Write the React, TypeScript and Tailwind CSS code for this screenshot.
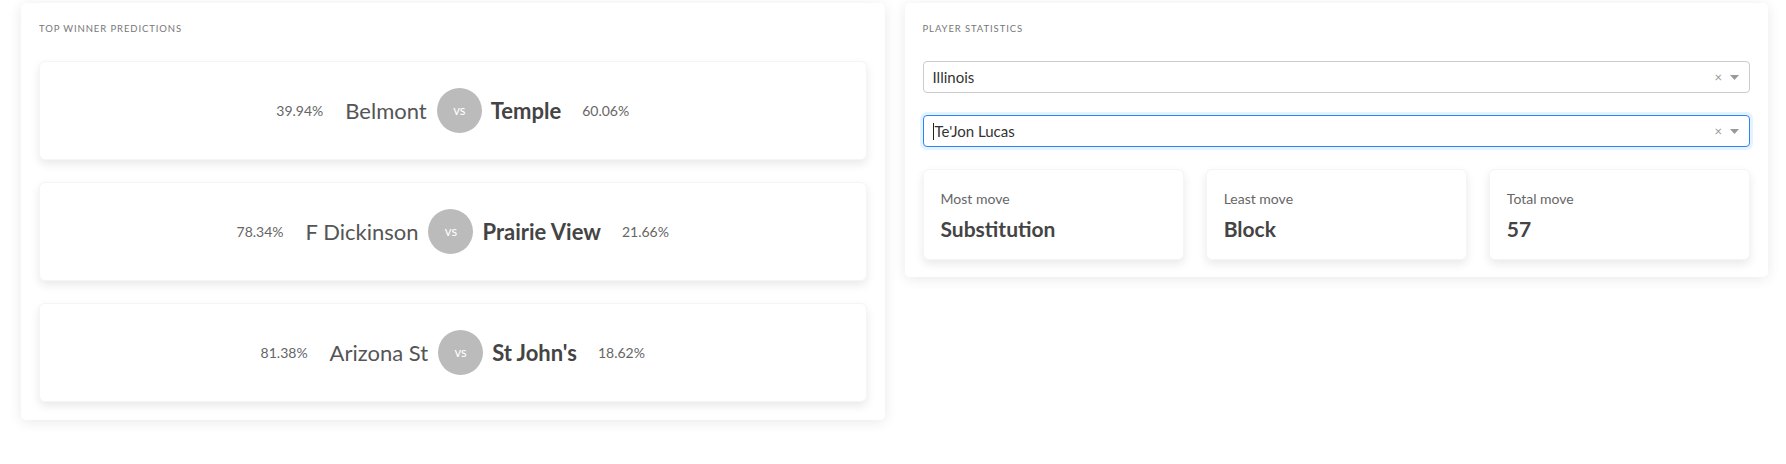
import React from "react";

const matches = [
  { left: "Belmont", lp: "39.94%", right: "Temple", rp: "60.06%" },
  { left: "F Dickinson", lp: "78.34%", right: "Prairie View", rp: "21.66%" },
  { left: "Arizona St", lp: "81.38%", right: "St John's", rp: "18.62%" },
];

const stats = [
  { label: "Most move", value: "Substitution" },
  { label: "Least move", value: "Block" },
  { label: "Total move", value: "57" },
];

function SelectBox({ value, focused }: { value: string; focused?: boolean }) {
  return (
    <div
      className={
        "flex h-[32px] items-center rounded-[4px] border bg-white pl-[9px] pr-[10px] " +
        (focused
          ? "border-[#2b86f5] shadow-[0_0_0_3px_rgba(0,126,255,0.1)]"
          : "border-[#cccccc]")
      }
    >
      <div className="flex flex-1 items-center text-[15px] text-[#333]">
        {focused ? <span className="mr-[1px] h-[17px] w-px bg-[#222]" /> : null}
        {value}
      </div>
      <span className="mr-[8px] text-[13px] leading-none text-[#999]">×</span>
      <svg width="9" height="5" viewBox="0 0 9 5">
        <path d="M0 0h9L4.5 5z" fill="#999" />
      </svg>
    </div>
  );
}

export default function App() {
  return (
    <div
      className="flex min-h-[464px] items-start gap-[20px] bg-white pl-[21px] pr-[18px] pt-[3px]"
      style={{ fontFamily: "Lato, 'Open Sans', sans-serif" }}
    >
      {/* Predictions */}
      <section className="flex-1 rounded-[5px] bg-white px-[18px] pb-[18px] pt-[19px] shadow-[0_2px_14px_rgba(0,0,0,0.09)]">
        <h2 className="text-[9.5px] uppercase tracking-[0.9px] text-[#777]">
          Top winner predictions
        </h2>
        <div className="mt-[25px] flex flex-col gap-[22px]">
          {matches.map((m) => (
            <div
              key={m.left}
              className="flex h-[99px] items-center justify-center rounded-[6px] border border-[#f5f5f5] bg-white shadow-[0_4px_10px_rgba(0,0,0,0.09)]"
            >
              <span className="text-[14px] text-[#666]">{m.lp}</span>
              <span className="ml-[22px] mr-[10px] text-[22px] text-[#555]">{m.left}</span>
              <span className="flex h-[45px] w-[45px] items-center justify-center rounded-full bg-[#bbbbbb] text-[13px] text-white">
                vs
              </span>
              <span className="ml-[9px] mr-[21px] text-[22px] font-bold text-[#444]">
                {m.right}
              </span>
              <span className="text-[14px] text-[#666]">{m.rp}</span>
            </div>
          ))}
        </div>
      </section>

      {/* Player statistics */}
      <section className="flex-1 rounded-[5px] bg-white px-[18px] pb-[17px] pt-[19px] shadow-[0_2px_14px_rgba(0,0,0,0.09)]">
        <h2 className="text-[9.5px] uppercase tracking-[0.9px] text-[#777]">
          Player statistics
        </h2>
        <div className="mt-[25px] flex flex-col gap-[22px]">
          <SelectBox value="Illinois" />
          <SelectBox value="Te'Jon Lucas" focused />
        </div>
        <div className="mt-[22px] grid grid-cols-3 gap-[22px]">
          {stats.map((s) => (
            <div
              key={s.label}
              className="h-[91px] rounded-[6px] border border-[#f5f5f5] bg-white px-[17px] pt-[18px] shadow-[0_4px_10px_rgba(0,0,0,0.09)]"
            >
              <div className="text-[14px] text-[#666]">{s.label}</div>
              <div className="mt-[4px] text-[21px] font-bold text-[#444]">{s.value}</div>
            </div>
          ))}
        </div>
      </section>
    </div>
  );
}
